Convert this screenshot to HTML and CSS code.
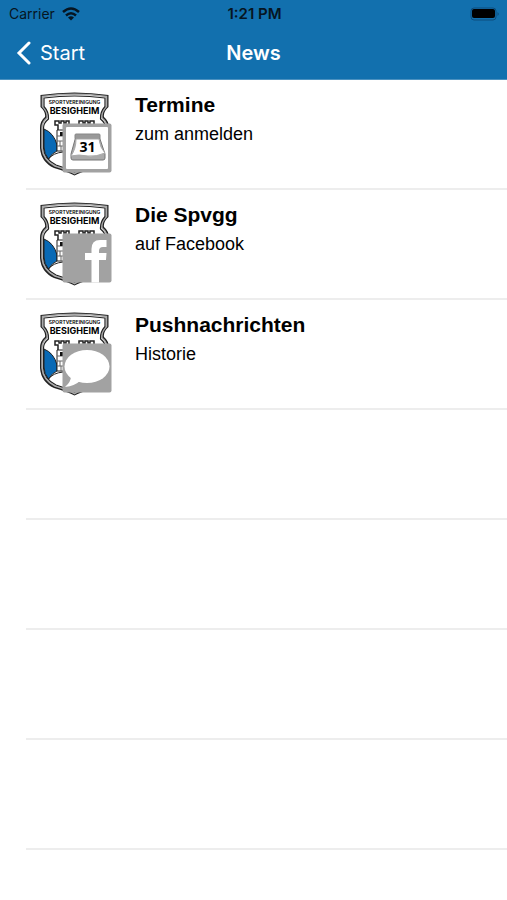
FILE: index.html
```html
<!DOCTYPE html>
<html lang="de">
  <head>
    <meta charset="UTF-8" />
    <meta name="viewport" content="width=device-width, initial-scale=1.0" />
    <title>News</title>
    <link rel="stylesheet" href="styles.css">
  </head>
  <body>
    <header class="header">
      <div class="status">
        <div class="carrier">
          <span>Carrier</span>
          <svg width="18" height="14" viewBox="0 0 18 14" fill="none" stroke="#061522" stroke-width="2.500" aria-hidden="true">
            <path d="M1 5Q9 -2 17 5" />
            <path d="M4 8.500Q9 4 14 8.500" />
            <path d="M9 13.500L6 10.500Q9 8 12 10.500Z" fill="#061522" stroke="none" />
          </svg>
        </div>
        <span class="time">1:21 PM</span>
        <svg class="battery" width="30" height="14" viewBox="0 0 30 14" aria-hidden="true">
          <rect x="1" y="1" width="25" height="12" rx="3" fill="none" stroke="#0c4c7c" />
          <rect x="2" y="2" width="23" height="9" rx="2" fill="#000" />
          <path d="M27.500 5V9Q30 7 27.500 5Z" fill="#0c4c7c" />
        </svg>
      </div>
      <nav class="nav">
        <a class="back" href="#">
          <svg width="16" height="24" viewBox="0 0 16 24" fill="none" stroke="#fff" stroke-width="3" stroke-linecap="round" aria-hidden="true">
            <path d="M13 2L3 12L13 22" />
          </svg>
          Start
        </a>
        <h1>News</h1>
      </nav>
    </header>

    <main>
      <ul class="list">
        <li>
          <a class="item" href="#">
            <svg class="icon" viewBox="0 0 72 84" aria-hidden="true">
              <!-- club crest, reused by the rows below -->
              <g id="crest">
                <path d="M0.500 3Q34.500 -2 68.500 3V15Q63 20 64 25Q69 29 69 36V56Q68 70 55 76Q41 80 34.500 83.500Q28 80 14 76Q1 70 0 56V36Q0 29 5 25Q6 20 0.500 15Z" fill="#222" />
                <path d="M2.500 4.500Q34.500 0 66.500 4.500V14.500Q61 20 62 26Q67 30 67 36V56Q66 68 54 74Q40 78 34.500 81.500Q29 78 15 74Q3 68 2 56V36Q2 30 7 26Q8 20 2.500 14.500Z" fill="#fff" stroke="#aaa" stroke-width="1.500" />
                <path d="M4 6Q34.500 2 65 6V14.500Q60 20 60.500 27Q65.500 31 65.500 36V56Q65 67 53 73Q40 77 34.500 80Q29 77 16 73Q4 67 3.500 56V36Q3.500 31 8.500 27Q9 20 4 14.500Z" fill="#fff" stroke="#222" stroke-width="1.200" />
                <path d="M4 37Q14 41 17 53V59Q12 61 8.500 67Q4 62 4 55Z" fill="#0869b5" stroke="#222" stroke-width="1" />
                <path d="M8.500 67Q13 61 23 60" fill="none" stroke="#222" stroke-width="1" />
                <path d="M15 29V33H18V39H27V33H29V29H26V31H24V29H21V31H19V29ZM39 29V33H42V39H51V33H54V29H50V31H48V29H45V31H43V29Z" fill="#fff" stroke="#222" stroke-width="1.500" />
                <path d="M17 38V59H24V38Z" fill="#fff" stroke="#222" stroke-width="1" />
                <path d="M17 44H24M17 49H24M17 54H24M20 49V54M21 54V59" stroke="#666" stroke-width="1" />
                <path d="M20 40H23V44H20Z" fill="#111" />
                <text class="crest-small" x="34.500" y="12" text-anchor="middle">SPORTVEREINIGUNG</text>
                <text class="crest-big" x="34.500" y="22" text-anchor="middle">BESIGHEIM</text>
              </g>
              <rect x="22.500" y="31.500" width="49" height="49" rx="2" fill="#a2a2a2" />
              <rect x="26" y="35" width="42" height="42" rx="1" fill="#fff" />
              <path d="M36 44H59L65 62V66Q65 68 63 68H33Q31 68 31 66V62Z" fill="#aaa" stroke="#777" />
              <rect x="35" y="42" width="25" height="5" rx="1" fill="#999" stroke="#888" />
              <path d="M36 47H59Q60 56 65 61Q56 65 48 64Q38 62 31 64Q36 57 36 47Z" fill="#fff" stroke="#aaa" />
              <text class="day" x="47.500" y="60" text-anchor="middle">31</text>
            </svg>
            <div class="text">
              <h2>Termine</h2>
              <p>zum anmelden</p>
            </div>
          </a>
        </li>
        <li>
          <a class="item" href="#">
            <svg class="icon" viewBox="0 0 72 84" aria-hidden="true">
              <use href="#crest" />
              <rect x="22.500" y="31.500" width="49" height="49" rx="2" fill="#a2a2a2" />
              <path d="M51.500 80.500V58H45V51H51.500V47Q51.500 38 60 38H66.500V45H63Q59 45 59 49V51H66.500L66 58H59V80.500Z" fill="#fff" />
            </svg>
            <div class="text">
              <h2>Die Spvgg</h2>
              <p>auf Facebook</p>
            </div>
          </a>
        </li>
        <li>
          <a class="item" href="#">
            <svg class="icon" viewBox="0 0 72 84" aria-hidden="true">
              <use href="#crest" />
              <rect x="22.500" y="31.500" width="49" height="49" rx="2" fill="#a2a2a2" />
              <ellipse cx="47" cy="54.500" rx="22.500" ry="16.500" fill="#fff" />
              <path d="M31 64Q31 70 25 75Q35 74 41 68Z" fill="#fff" />
            </svg>
            <div class="text">
              <h2>Pushnachrichten</h2>
              <p>Historie</p>
            </div>
          </a>
        </li>
        <li></li>
        <li></li>
        <li></li>
        <li></li>
      </ul>
    </main>
  </body>
</html>
```

FILE: styles.css
```css
* {
  margin: 0;
  padding: 0;
  box-sizing: border-box;
}

body {
  background: #ffffff;
  color: #000000;
  font-family: "Liberation Sans", Arial, sans-serif;
}

.header {
  background: #1270ae;
  border-bottom: 1px solid #4b91c0;
  font-family: Inter, sans-serif;
}

.status {
  display: grid;
  grid-template-columns: 1fr auto 1fr;
  align-items: center;
  height: 27px;
  padding: 0 7px 0 9px;
  color: #061522;
  font-size: 14px;
}

.carrier {
  display: flex;
  align-items: center;
  gap: 7px;
}

.time {
  font-size: 15px;
  font-weight: 600;
}

.battery {
  justify-self: end;
}

.nav {
  display: grid;
  grid-template-columns: 1fr auto 1fr;
  align-items: center;
  height: 52px;
  padding: 0 16px;
  color: #ffffff;
}

.back {
  display: flex;
  align-items: center;
  gap: 8px;
  color: #ffffff;
  font-size: 20px;
  text-decoration: none;
}

.nav h1 {
  font-size: 20px;
  font-weight: 600;
}

.list {
  padding-left: 26px;
  list-style: none;
}

.list li {
  height: 110px;
  border-bottom: 2px solid #ededed;
}

.item {
  display: flex;
  gap: 23px;
  padding: 12px 14px;
  color: #000000;
  text-decoration: none;
}

.icon {
  flex: none;
  width: 72px;
  height: 84px;
}

.text h2 {
  font-size: 21px;
  line-height: 26px;
}

.text p {
  margin-top: 3px;
  font-size: 18px;
  line-height: 26px;
}

.crest-small {
  font: 600 5px Inter, sans-serif;
}

.crest-big {
  font: 700 9px Inter, sans-serif;
}

.day {
  font: 700 14px "Open Sans", sans-serif;
}
```
